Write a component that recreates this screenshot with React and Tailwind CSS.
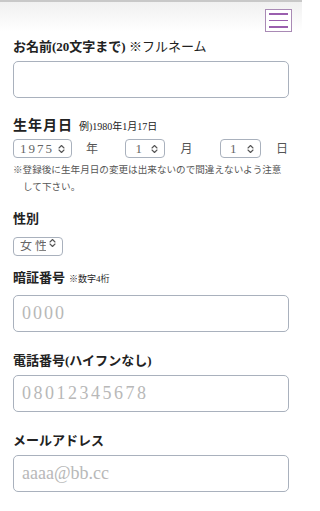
import React from "react";

// 上下の小さいシェブロン（ネイティブselect風）
const UpDown = () => (
  <svg width="7" height="10" viewBox="0 0 7 10" className="pointer-events-none absolute right-[7px] top-1/2 -translate-y-1/2">
    <path d="M1 4 L3.5 1.5 L6 4" fill="none" stroke="#555" strokeWidth="1.1" strokeLinecap="round" strokeLinejoin="round" />
    <path d="M1 6 L3.5 8.5 L6 6" fill="none" stroke="#555" strokeWidth="1.1" strokeLinecap="round" strokeLinejoin="round" />
  </svg>
);

const Select = ({ value, options, width, textClass = "" }) => (
  <span className={`relative block h-[19px] ${width}`}>
    <select
      defaultValue={value}
      className={`appearance-none w-full h-full bg-white border border-[#a9b1bd] rounded-[4px] pl-[6px] pr-[16px] text-[#666] leading-none outline-none ${textClass}`}
    >
      {options.map((o) => (
        <option key={o} value={o}>
          {o}
        </option>
      ))}
    </select>
    <UpDown />
  </span>
);

const TextInput = ({ placeholder = "", tracking = "" }) => (
  <input
    type="text"
    placeholder={placeholder}
    className={`block w-full h-[37px] bg-white border border-[#a9b1bd] rounded-[5px] px-[8px] text-[18px] text-[#333] placeholder:text-[#b8b8b8] outline-none ${tracking}`}
  />
);

const Label = ({ children, className = "" }) => (
  <div className={`text-[13px] leading-[20px] font-semibold text-[#222] ${className}`}>{children}</div>
);

export default function App() {
  const years = Array.from({ length: 80 }, (_, i) => String(1940 + i));
  const months = Array.from({ length: 12 }, (_, i) => String(i + 1));
  const days = Array.from({ length: 31 }, (_, i) => String(i + 1));

  return (
    <div
      className="w-[302px] min-h-[511px] bg-white overflow-hidden"
      style={{ fontFamily: '"Liberation Serif", "Noto Sans CJK JP", serif' }}
    >
      {/* ヘッダーの影 */}
      <div className="border-t-2 border-[#c8c8c8] bg-gradient-to-b from-[#f0f0f0] to-white">
        <div className="flex justify-end pt-[7px] pr-[10px]">
          <button className="w-[27px] h-[23px] border border-[#a98ab5] bg-white flex flex-col justify-center items-center gap-[5px]">
            <span className="block w-[19px] h-[1.5px] bg-[#9a5fae]" />
            <span className="block w-[19px] h-[1.5px] bg-[#9a5fae]" />
            <span className="block w-[19px] h-[1.5px] bg-[#9a5fae]" />
          </button>
        </div>
      </div>

      <form className="px-[13px] pb-[20px]">
        {/* 名前 */}
        <Label className="mt-[5px] mb-[4px]">
          お名前(20文字まで) <span className="font-normal">※フルネーム</span>
        </Label>
        <TextInput />

        {/* 生年月日 */}
        <div className="mt-[18px] flex items-baseline leading-[20px] text-[#222]">
          <span className="text-[14px] font-semibold tracking-[1px]">生年月日</span>
          <span className="ml-[6px] text-[10px]">例)1980年1月17日</span>
        </div>
        <div className="mt-[2px] flex justify-between items-center w-[275px] text-[12px] text-[#555]">
          <div className="flex items-center">
            <Select value="1975" options={years} width="w-[59px]" textClass="text-[13px] tracking-[2px]" />
            <span className="ml-[14px]">年</span>
          </div>
          <div className="flex items-center">
            <Select value="1" options={months} width="w-[40px]" textClass="text-[13px] pl-[9px]" />
            <span className="ml-[15px]">月</span>
          </div>
          <div className="flex items-center">
            <Select value="1" options={days} width="w-[41px]" textClass="text-[13px] pl-[9px]" />
            <span className="ml-[15px]">日</span>
          </div>
        </div>
        <p className="mt-[3px] pl-[10px] -indent-[10px] text-[9.6px] leading-[17px] text-[#555]">
          ※登録後に生年月日の変更は出来ないので間違えないよう注意して下さい。
        </p>

        {/* 性別 */}
        <Label className="mt-[14px] mb-[4px]">性別</Label>
        <div className="flex">
          <Select value="女性" options={["女性", "男性"]} width="w-[50px]" textClass="text-[12px] tracking-[3px]" />
        </div>

        {/* 暗証番号 */}
        <div className="mt-[16px] mb-[6px] flex items-baseline leading-[20px] text-[#222]">
          <span className="text-[13px] font-semibold">暗証番号</span>
          <span className="ml-[4px] text-[9px]">※数字4桁</span>
        </div>
        <TextInput placeholder="0000" tracking="tracking-[2px]" />

        {/* 電話番号 */}
        <Label className="mt-[19px] mb-[4px]">電話番号(ハイフンなし)</Label>
        <TextInput placeholder="08012345678" tracking="tracking-[2.5px]" />

        {/* メール */}
        <Label className="mt-[19px] mb-[4px] font-normal">メールアドレス</Label>
        <TextInput placeholder="aaaa@bb.cc" />
      </form>
    </div>
  );
}
